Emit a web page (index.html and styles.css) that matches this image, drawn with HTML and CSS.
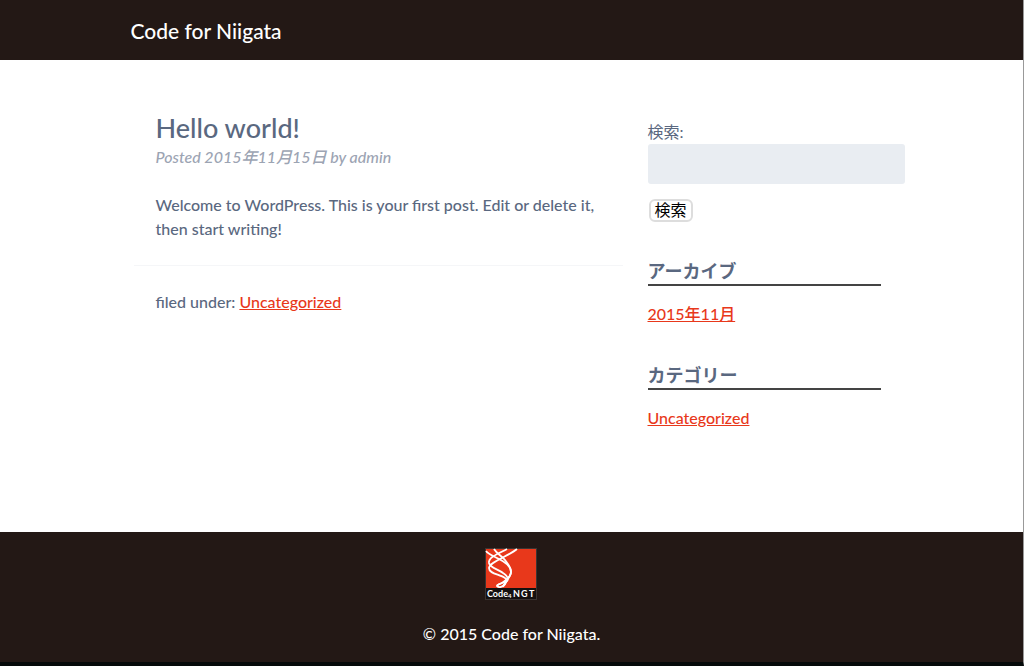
FILE: index.html
```html
<!DOCTYPE html>
<html lang="ja">
<head>
<meta charset="utf-8">
<title>Code for Niigata</title>
<link rel="stylesheet" href="styles.css">
</head>
<body>
<div class="page">
  <header class="site-header">
    <div class="container"><a class="site-title" href="#">Code for Niigata</a></div>
  </header>
  <div class="container content">
    <main class="main">
      <article>
        <header class="post-header">
          <h1 class="post-title">Hello world!</h1>
          <p class="post-meta">Posted 2015年11月15日 by admin</p>
        </header>
        <p class="post-body">Welcome to WordPress. This is your first post. Edit or delete it, then start writing!</p>
        <footer class="post-footer">filed under: <a class="link" href="#">Uncategorized</a></footer>
      </article>
    </main>
    <aside class="sidebar">
      <form class="search">
        <label class="search-label" for="s">検索:</label>
        <input class="search-input" type="text" id="s">
        <button class="search-button" type="button">検索</button>
      </form>
      <section class="widget">
        <h2 class="widget-title">アーカイブ</h2>
        <a class="link" href="#">2015年11月</a>
      </section>
      <section class="widget">
        <h2 class="widget-title">カテゴリー</h2>
        <a class="link" href="#">Uncategorized</a>
      </section>
    </aside>
  </div>
  <footer class="site-footer">
    <svg class="logo" viewBox="0 0 52 52" role="img" aria-label="Code4NGT">
      <rect width="52" height="52" fill="#3b3432"/>
      <rect x="1" y="1" width="50" height="39" fill="#e8381b"/>
      <rect x="1" y="40" width="50" height="11" fill="#15100f"/>
      <g fill="none" stroke="#fff" stroke-width="1.8">
        <path d="M1 3C4 7 9 8 14 11C20 14 26 18 26 24C26 30 20 32 18 39"/>
        <path d="M9 1C12 6 17 8 20 12C23 16 26 19 26 24C26 29 21 32 17 35C14 37 12 36 12 38C14 40 18 39 20 36"/>
        <path d="M22 1C15 5 3 9 4 15C5 20 13 21 18 25C24 29 24 33 20 34C16 35 13 36 12 38"/>
        <path d="M32 1C24 8 4 14 4 20C4 26 15 26 20 30C23 32 21 36 18 38"/>
      </g>
      <text class="logo-text" x="2" y="49">Code</text>
      <text class="logo-small" x="23" y="50">4</text>
      <text class="logo-text" x="28" y="49">N</text>
      <text class="logo-text" x="36" y="49">G</text>
      <text class="logo-text" x="44" y="49">T</text>
    </svg>
    <p class="copyright">© 2015 Code for Niigata.</p>
  </footer>
</div>
</body>
</html>
```
FILE: styles.css
```css
* { box-sizing: border-box; }
body {
  margin: 0;
  background: #fff;
  color: #5a6880;
  font: 500 16px/24px Lato, "Noto Sans CJK JP", sans-serif;
}
h1, h2, p { margin: 0; }
.page {
  display: flex;
  flex-direction: column;
  min-height: 100vh;
  border-right: 1px solid #999;
  border-bottom: 4px solid #050a0a;
}
.container {
  width: 100%;
  max-width: 762px;
  margin: 0 auto;
}
.site-header {
  padding: 16px 0 14px;
  background: #231815;
}
.site-title {
  display: block;
  color: #fff;
  font-size: 21px;
  line-height: 30px;
  text-decoration: none;
}
.content {
  display: flex;
  flex: 1;
  align-items: flex-start;
  padding-top: 50px;
}
.main { flex: 1; padding: 0 0 0 3px; }
.post-header { padding: 0 22px; }
.post-title {
  font-size: 27px;
  line-height: 35px;
  font-weight: 500;
}
.post-meta { color: #9ca4b3; font-style: italic; }
.post-body {
  padding: 24px 22px;
  border-bottom: 1px solid #f5f6f8;
}
.post-footer { padding: 24px 22px; }
.sidebar { width: 270px; padding: 10px 12px 0 25px; }
.search {
  display: flex;
  flex-direction: column;
  align-items: flex-start;
}
.search-label { font-weight: 400; }
.search-input {
  width: 257px;
  height: 40px;
  padding: 8px;
  border: 0;
  border-radius: 3px;
  background: #e9edf2;
  font: inherit;
}
.search-button {
  margin: 15px 1px 0;
  padding: 0 4px 1px;
  border: 2px solid #ddd;
  border-radius: 6px;
  background: #fff;
  color: #000;
  font: 16px/18px Lato, "Noto Sans CJK JP", sans-serif;
}
.widget { padding-top: 38px; }
.widget-title {
  margin-bottom: 16px;
  padding-bottom: 1px;
  border-bottom: 2px solid #444;
  font-size: 18px;
  line-height: 23px;
  font-weight: 700;
}
.link { color: #e8381b; text-decoration: underline; }
.site-footer {
  display: flex;
  flex-direction: column;
  align-items: center;
  gap: 22px;
  padding: 16px 0;
  background: #231815;
}
.logo { width: 52px; height: 52px; margin-right: 1px; }
.logo-text { fill: #fff; font: 700 9px Lato, sans-serif; }
.logo-small { fill: #fff; font: 700 6px Lato, sans-serif; }
.copyright { color: #fff; }
```
